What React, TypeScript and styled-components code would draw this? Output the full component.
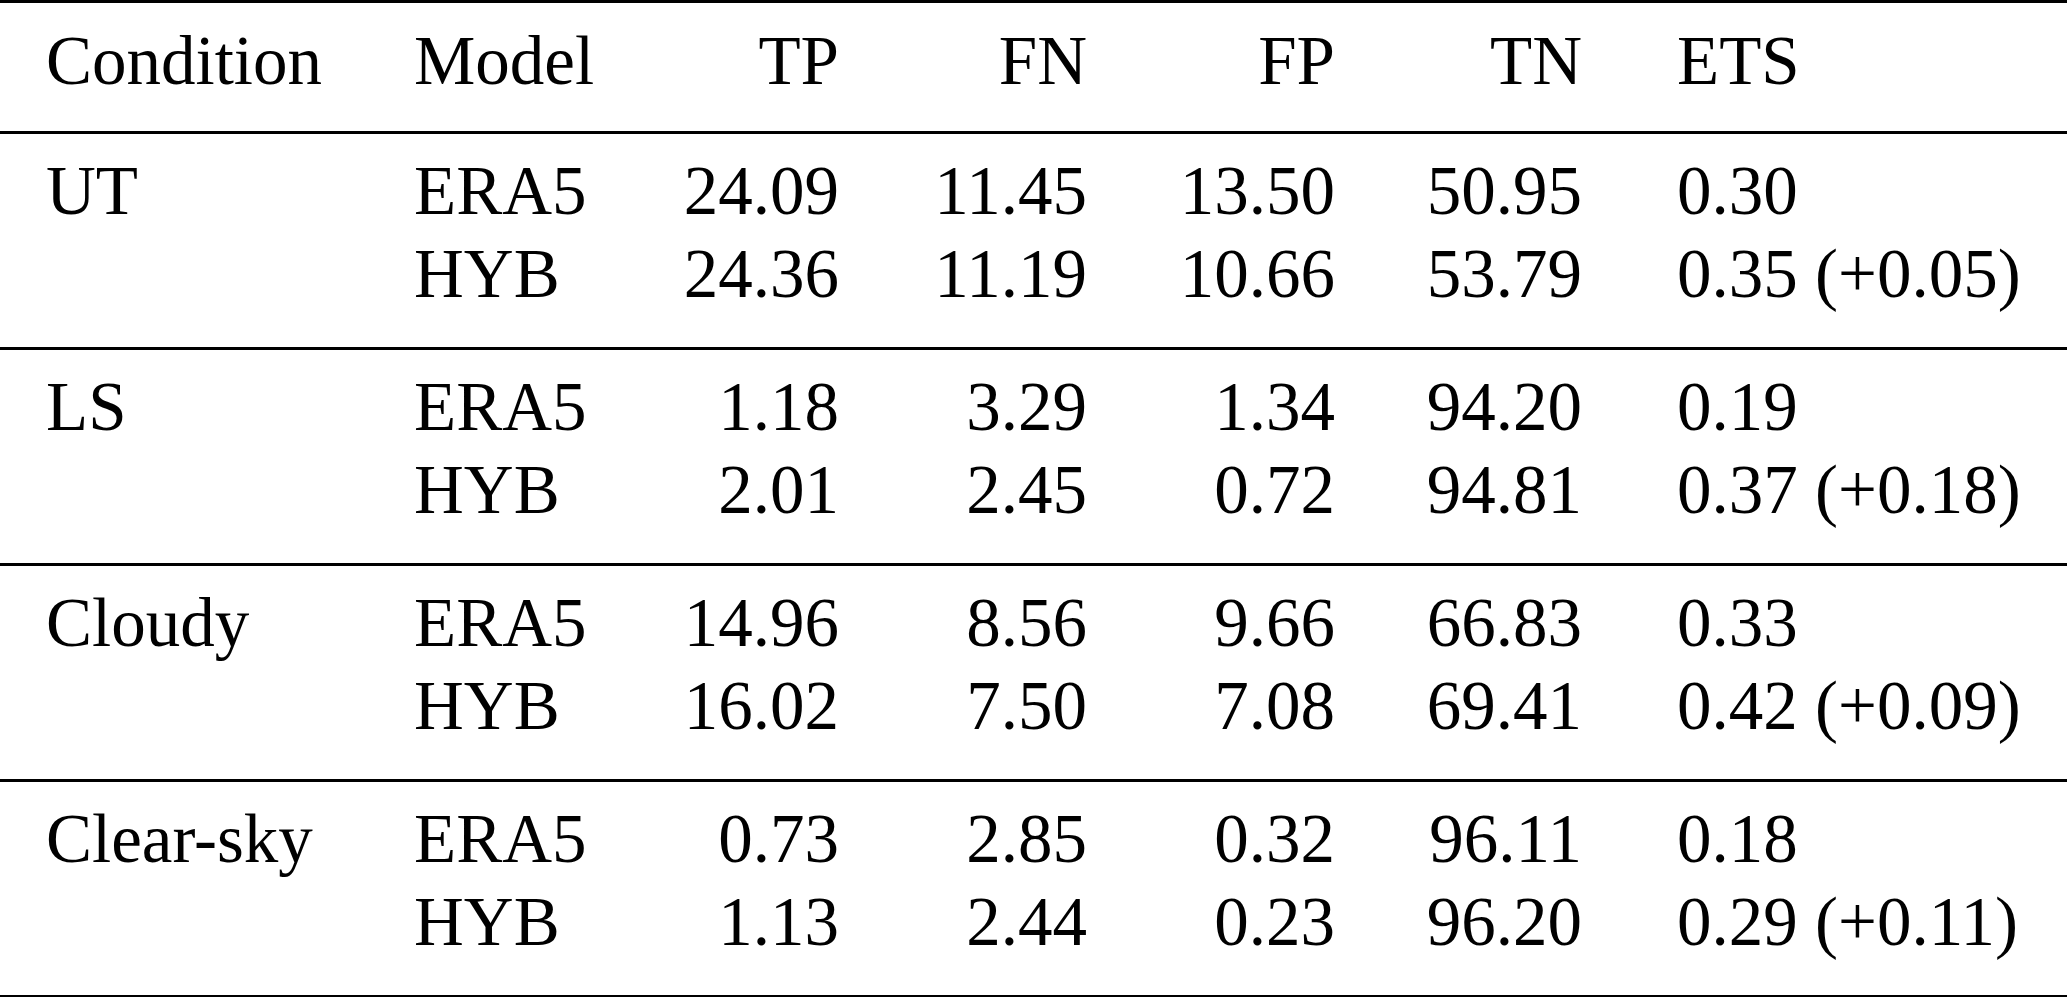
import React from "react";
import styled, { createGlobalStyle } from "styled-components";

const GlobalStyle = createGlobalStyle`
  html, body {
    margin: 0;
    padding: 0;
    background: #ffffff;
  }
  body {
    font-family: "Liberation Serif", "Times New Roman", serif;
    color: #000;
  }
`;

const Page = styled.div`
  width: 2067px;
  background: #fff;
  font-family: "Liberation Serif", "Times New Roman", serif;
  font-size: 69px;
  line-height: 83px;
  color: #000;
  border-top: 3px solid #000;
`;

const Head = styled.div`
  padding: 17px 0 28px;
  border-bottom: 3px solid #000;
`;

const Group = styled.div`
  padding: 16px 0 30px;
  height: 216px;
  box-sizing: border-box;
  border-bottom: 3px solid #000;
`;

const Row = styled.div`
  display: grid;
  grid-template-columns: 368px 200px 225px 248px 248px 247px 1fr;
  padding-left: 46px;
  height: 83px;
  white-space: nowrap;
`;

const Cell = styled.div<{ $align?: "left" | "right" }>`
  text-align: ${(p) => p.$align ?? "left"};
`;

const EtsCell = styled.div`
  padding-left: 95px;
`;

type Entry = {
  model: string;
  tp: string;
  fn: string;
  fp: string;
  tn: string;
  ets: string;
};

type GroupData = { condition: string; rows: Entry[] };

const data: GroupData[] = [
  {
    condition: "UT",
    rows: [
      { model: "ERA5", tp: "24.09", fn: "11.45", fp: "13.50", tn: "50.95", ets: "0.30" },
      { model: "HYB", tp: "24.36", fn: "11.19", fp: "10.66", tn: "53.79", ets: "0.35 (+0.05)" },
    ],
  },
  {
    condition: "LS",
    rows: [
      { model: "ERA5", tp: "1.18", fn: "3.29", fp: "1.34", tn: "94.20", ets: "0.19" },
      { model: "HYB", tp: "2.01", fn: "2.45", fp: "0.72", tn: "94.81", ets: "0.37 (+0.18)" },
    ],
  },
  {
    condition: "Cloudy",
    rows: [
      { model: "ERA5", tp: "14.96", fn: "8.56", fp: "9.66", tn: "66.83", ets: "0.33" },
      { model: "HYB", tp: "16.02", fn: "7.50", fp: "7.08", tn: "69.41", ets: "0.42 (+0.09)" },
    ],
  },
  {
    condition: "Clear-sky",
    rows: [
      { model: "ERA5", tp: "0.73", fn: "2.85", fp: "0.32", tn: "96.11", ets: "0.18" },
      { model: "HYB", tp: "1.13", fn: "2.44", fp: "0.23", tn: "96.20", ets: "0.29 (+0.11)" },
    ],
  },
];

export default function App() {
  return (
    <>
      <GlobalStyle />
      <Page>
        <Head>
          <Row>
            <Cell>Condition</Cell>
            <Cell>Model</Cell>
            <Cell $align="right">TP</Cell>
            <Cell $align="right">FN</Cell>
            <Cell $align="right">FP</Cell>
            <Cell $align="right">TN</Cell>
            <EtsCell>ETS</EtsCell>
          </Row>
        </Head>
        {data.map((g) => (
          <Group key={g.condition}>
            {g.rows.map((r, i) => (
              <Row key={r.model}>
                <Cell>{i === 0 ? g.condition : ""}</Cell>
                <Cell>{r.model}</Cell>
                <Cell $align="right">{r.tp}</Cell>
                <Cell $align="right">{r.fn}</Cell>
                <Cell $align="right">{r.fp}</Cell>
                <Cell $align="right">{r.tn}</Cell>
                <EtsCell>{r.ets}</EtsCell>
              </Row>
            ))}
          </Group>
        ))}
      </Page>
    </>
  );
}
